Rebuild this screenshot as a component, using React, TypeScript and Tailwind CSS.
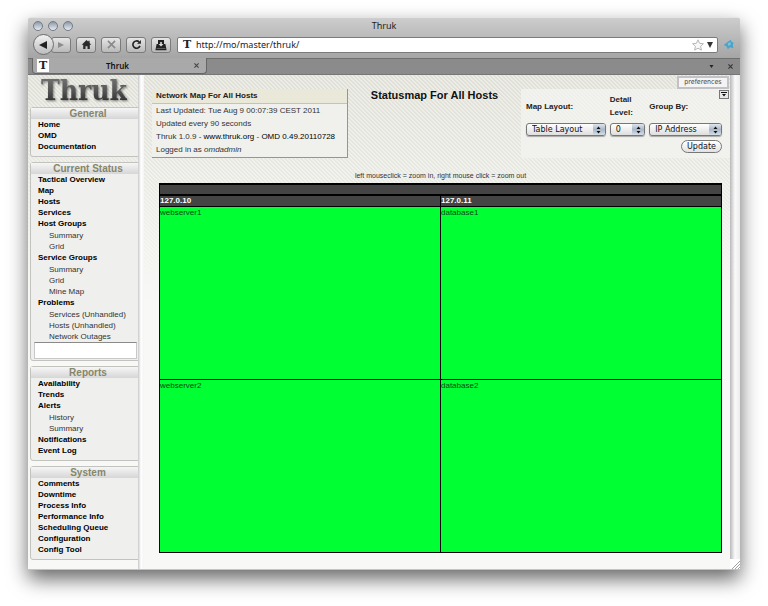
import React from "react";

type MenuItem = { label: string; children?: string[] };
type MenuSection = { title: string; items: MenuItem[]; search?: boolean };

const sections: MenuSection[] = [
  { title: "General", items: [{ label: "Home" }, { label: "OMD" }, { label: "Documentation" }] },
  {
    title: "Current Status",
    search: true,
    items: [
      { label: "Tactical Overview" },
      { label: "Map" },
      { label: "Hosts" },
      { label: "Services" },
      { label: "Host Groups", children: ["Summary", "Grid"] },
      { label: "Service Groups", children: ["Summary", "Grid", "Mine Map"] },
      { label: "Problems", children: ["Services (Unhandled)", "Hosts (Unhandled)", "Network Outages"] },
    ],
  },
  {
    title: "Reports",
    items: [
      { label: "Availability" },
      { label: "Trends" },
      { label: "Alerts", children: ["History", "Summary"] },
      { label: "Notifications" },
      { label: "Event Log" },
    ],
  },
  {
    title: "System",
    items: [
      { label: "Comments" },
      { label: "Downtime" },
      { label: "Process Info" },
      { label: "Performance Info" },
      { label: "Scheduling Queue" },
      { label: "Configuration" },
      { label: "Config Tool" },
    ],
  },
];

const hatch =
  "bg-[linear-gradient(to_bottom,rgba(248,248,246,0)_0px,rgba(248,248,246,0.25)_60px,rgba(248,248,246,1)_230px),linear-gradient(45deg,#dfdfd7_25%,#ededE7_25%,#ededE7_50%,#dfdfd7_50%,#dfdfd7_75%,#ededE7_75%)] [background-size:100%_100%,4px_4px]";

function TFavicon() {
  return (
    <span className="flex h-[13px] w-3 shrink-0 items-center justify-center bg-white font-['DejaVu_Serif',serif] text-[11px] leading-3 font-bold text-[#222]">
      T
    </span>
  );
}

function ToolButton({ label, className = "", children }: { label: string; className?: string; children: React.ReactNode }) {
  return (
    <button
      type="button"
      aria-label={label}
      className={`flex h-4 w-5 items-center justify-center rounded-[3px] border border-[#7b7b7b] bg-gradient-to-b from-[#e6e6e6] to-[#b9b9b9] ${className}`}
    >
      {children}
    </button>
  );
}

function Toolbar() {
  return (
    <div className="flex items-center pr-[6px] pl-[5px]">
      <button
        type="button"
        aria-label="Back"
        className="z-10 flex size-[21px] items-center justify-center rounded-full border border-[#6d6d6d] bg-gradient-to-b from-[#f2f2f2] to-[#bdbdbd]"
      >
        <svg viewBox="0 0 8 8" className="mr-[2px] size-2" fill="#222"><path d="M0 4 8 0v8z" /></svg>
      </button>
      <ToolButton label="Forward" className="-ml-[3px]">
        <svg viewBox="0 0 6 6" className="size-[6px]" fill="#8d8d8d"><path d="M6 3 0 0v6z" /></svg>
      </ToolButton>
      <ToolButton label="Home" className="ml-[5px]">
        <svg viewBox="0 0 12 12" className="size-[11px]" fill="#2a2a2a">
          <path d="M6 1 .8 6.2h1.6V11h2.5V7.8h2.2V11h2.5V6.2h1.6L9.4 4.3V1.8H8v1.1z" />
        </svg>
      </ToolButton>
      <ToolButton label="Stop" className="ml-[5px]">
        <svg viewBox="0 0 10 10" className="size-[9px]" stroke="#8a8a8a" strokeWidth="1.8"><path d="m1 1 8 8M9 1 1 9" /></svg>
      </ToolButton>
      <ToolButton label="Reload" className="ml-[5px]">
        <svg viewBox="0 0 12 12" className="size-[11px]" fill="none" stroke="#222" strokeWidth="1.8">
          <path d="M8.8 3.2A4 4 0 1 0 9.8 7.5" /><path d="M6.6 5.3h4.2V1z" fill="#222" stroke="none" />
        </svg>
      </ToolButton>
      <ToolButton label="Downloads" className="ml-[5px]">
        <svg viewBox="0 0 12 12" className="size-3" fill="#222">
          <path d="M3 1h6v4h1.4l1.2 6.200H.4L1.600 5H3z" />
          <path d="M5.200 3h1.600v2h1.700L6 7.600 3.500 5h1.700z" fill="#ddd" /><path d="M1.500 9.500h9" stroke="#888" strokeWidth=".6" />
        </svg>
      </ToolButton>
      <div className="ml-[6px] flex h-4 min-w-0 flex-1 items-center rounded-[2px] border border-[#7b7b7b] bg-white pr-1 pl-[3px]">
        <TFavicon />
        <input
          aria-label="Address"
          defaultValue="http://mo/master/thruk/"
          className="ml-[3px] h-[14px] min-w-0 flex-1 bg-transparent font-['Noto_Sans',sans-serif] text-[9px] text-[#222] outline-none"
        />
        <svg viewBox="0 0 12 12" className="size-3" fill="#f8f8f8" stroke="#b0b0b0" strokeWidth=".9">
          <path d="m6 .8 1.6 3.5 3.8.4-2.8 2.6.8 3.8L6 9.2l-3.4 1.9.8-3.8L.6 4.7l3.8-.4z" />
        </svg>
        <svg viewBox="0 0 6 6" className="ml-[3px] size-[6px]" fill="#333"><path d="M0 0h6L3 6z" /></svg>
      </div>
      <svg viewBox="0 0 12 12" className="ml-[5px] size-[11px]">
        <path d="M.8 6.5 5 3.400 8.500.8l1 2.400 2 .6-.8 2.800.6 3.400-3.600-.9-2.400 2-1.400-3z" fill="#4ba3c7" />
        <path d="m5 5 3-1.600.6 2.600-2.400 1.600z" fill="#7cc4de" />
      </svg>
    </div>
  );
}

function BrowserChrome() {
  return (
    <header>
      <div className="h-[41px] border-t border-[#e4e4e4] bg-gradient-to-b from-[#cdcdcd] to-[#a5a5a5]">
        <div className="relative flex h-4 items-center gap-[5px] pl-[5px]">
          {["Close", "Minimize", "Zoom"].map((name) => (
            <button
              key={name}
              type="button"
              aria-label={name}
              className="size-[10px] rounded-full border border-[#737b86] bg-gradient-to-b from-[#8f9aa8] to-[#e8edf3]"
            />
          ))}
          <span className="absolute inset-x-0 text-center font-['Noto_Sans',sans-serif] text-[9px] leading-4 text-[#222]">Thruk</span>
        </div>
        <Toolbar />
      </div>
      <div className="flex h-[17px] items-start border-t border-b border-t-[#6f6f6f] border-b-[#777] bg-[#8b8b8b] pr-[5px] pl-1">
        <div className="-mt-px flex h-4 w-[175px] items-center rounded-b-[4px] border border-t-0 border-[#666] bg-[#a9a9a9] pr-[7px] pl-1">
          <TFavicon />
          <span className="flex-1 pr-2 text-center font-['Noto_Sans',sans-serif] text-[8px] leading-3 font-semibold text-[#111]">Thruk</span>
          <button type="button" aria-label="Close tab" className="flex">
            <svg viewBox="0 0 6 6" className="size-[5px]" stroke="#444" strokeWidth="1.3"><path d="m.5.5 5 5M5.5.5l-5 5" /></svg>
          </button>
        </div>
        <div className="ml-auto flex h-[15px] items-center gap-[14px] pr-[2px]">
          <button type="button" aria-label="List tabs" className="flex">
            <svg viewBox="0 0 4 3" className="h-[3px] w-[5px]" fill="#222"><path d="M0 0h4L2 3z" /></svg>
          </button>
          <button type="button" aria-label="Close" className="flex">
            <svg viewBox="0 0 6 6" className="size-[5px]" stroke="#333" strokeWidth="1.3"><path d="m.5.5 5 5M5.5.5l-5 5" /></svg>
          </button>
        </div>
      </div>
    </header>
  );
}

function Sidebar() {
  return (
    <nav className={`w-[110px] shrink-0 overflow-hidden pb-2 pl-[2px] ${hatch}`}>
      <div className="flex h-8 justify-center">
        <span className="bg-gradient-to-b from-[#777] via-[#555] to-[#222] bg-clip-text font-['DejaVu_Serif_Condensed','DejaVu_Serif',serif] text-[28px] leading-8 font-bold text-transparent drop-shadow-[1px_1px_1px_rgba(0,0,0,0.5)]">
          Thruk
        </span>
      </div>
      <div className="-mr-2 flex flex-col gap-[5px]">
        {sections.map((s) => (
          <section key={s.title} className={`rounded-[3px] border border-[#c2c2be] bg-[#efefed] ${s.search ? "pb-px" : "pb-1"}`}>
            <h2 className="h-[11px] bg-gradient-to-b from-[#f6f6f6] to-[#d6d6d6] text-center text-[10px] leading-[11px] font-bold text-[#86866a]">
              {s.title}
            </h2>
            <ul className="pl-[7px] text-[8px] leading-[11px]">
              {s.items.map((item) => (
                <li key={item.label}>
                  <a href="#" className="block font-bold text-black">{item.label}</a>
                  {item.children && (
                    <ul className="pt-px pl-[11px]">
                      {item.children.map((c) => (
                        <li key={c}><a href="#" className="block text-[#333]">{c}</a></li>
                      ))}
                    </ul>
                  )}
                </li>
              ))}
            </ul>
            {s.search && (
              <input
                aria-label="Search"
                className="mr-[9px] ml-[3px] block h-[17px] w-[103px] border border-[#c8c8c8] border-t-[#8a8a8a] bg-white px-1 text-[8px] outline-none"
              />
            )}
          </section>
        ))}
      </div>
    </nav>
  );
}

function InfoBox() {
  return (
    <section className="w-[196px] shrink-0 self-start border-r border-b border-[#96968c] bg-[#f0f0ed] text-[8px] text-[#333]">
      <h2 className="h-[15px] border-b border-[#c4c4b4] bg-[#eae8d8] pl-1 text-[8px] leading-[14px] font-bold text-[#222]">
        Network Map For All Hosts
      </h2>
      <div className="pb-px pl-1 leading-[13px]">
        <p>Last Updated: Tue Aug 9 00:07:39 CEST 2011</p>
        <p>Updated every 90 seconds</p>
        <p>
          Thruk 1.0.9 - <a href="#" className="text-black">www.thruk.org</a> - <a href="#" className="text-black">OMD 0.49.20110728</a>
        </p>
        <p>Logged in as <em>omdadmin</em></p>
      </div>
    </section>
  );
}

function Field({ id, label, value, width }: { id: string; label: string; value: string; width: string }) {
  return (
    <div className={`flex flex-col ${width}`}>
      <label htmlFor={id} className="flex h-[26px] items-center text-[8px] leading-[13px] font-bold text-[#222]">{label}</label>
      <div className="relative mt-1">
        <select
          id={id}
          className="block h-[13px] w-full appearance-none rounded-[3px] border border-[#777] bg-gradient-to-b from-white to-[#dedede] pl-[5px] font-['DejaVu_Sans',sans-serif] text-[8px] leading-[11px] text-[#111] shadow-[0_1px_1px_rgba(0,0,0,0.3)]"
        >
          <option>{value}</option>
        </select>
        <span className="pointer-events-none absolute inset-y-px right-px flex w-3 items-center justify-center rounded-r-[2px] bg-gradient-to-b from-[#dfe6ee] via-[#a9b7c8] to-[#d5dfea]">
          <svg viewBox="0 0 5 8" className="h-2 w-[5px]" fill="#111"><path d="M2.500.5 4.500 3H.5zM2.500 7.500 4.500 5H.5z" /></svg>
        </span>
      </div>
    </div>
  );
}

function FilterForm() {
  return (
    <form className="flex w-[209px] shrink-0 flex-col self-start bg-[#f3f3ef]/80 pt-1 pr-2 pb-[5px] pl-[5px]" onSubmit={(e) => e.preventDefault()}>
      <div className="flex gap-1">
        <Field id="layout" label="Map Layout:" value="Table Layout" width="w-[81px]" />
        <Field id="detail" label="Detail Level:" value="0" width="w-9" />
        <Field id="group" label="Group By:" value="IP Address" width="w-[74px]" />
      </div>
      <button
        type="submit"
        className="mt-1 h-[13px] w-[41px] self-end rounded-full border border-[#777] bg-gradient-to-b from-white to-[#e2e2e2] font-['DejaVu_Sans',sans-serif] text-[8px] leading-[11px] text-[#111]"
      >
        Update
      </button>
    </form>
  );
}

function StatusMap() {
  const rows = [["webserver1", "database1"], ["webserver2", "database2"]];
  return (
    <table className="w-full table-fixed border-collapse border border-t-2 border-black text-left text-[8px] leading-[9px]">
      <thead className="bg-[#444] text-white">
        <tr className="h-[11px]"><td colSpan={2} className="border border-b-2 border-black p-0" /></tr>
        <tr className="h-[11px]">
          <th className="border border-black p-0">127.0.10</th>
          <th className="border border-black p-0">127.0.11</th>
        </tr>
      </thead>
      <tbody>
        {rows.map((row) => (
          <tr key={row[0]} className="h-[173px]">
            {row.map((host) => (
              <td key={host} className="border border-black bg-[#00ff33] p-0 align-top text-[#0a4a14]">
                <div className="pt-px">{host}</div>
              </td>
            ))}
          </tr>
        ))}
      </tbody>
    </table>
  );
}

export default function App() {
  return (
    <div className="min-h-screen bg-white px-7 pt-[17px] pb-9 font-['Liberation_Sans',Arial,sans-serif]">
      <div className="overflow-hidden rounded-t-[3px] shadow-[0_9px_20px_rgba(0,0,0,0.6)]">
        <BrowserChrome />
        <div className="flex border-b border-[#c4c4c4] bg-[#f8f8f6]">
          <Sidebar />
          <div className="w-[6px] shrink-0 bg-gradient-to-r from-[#c9c9c9] via-white to-[#f4f4f4]" />
          <main className={`relative flex min-w-0 flex-1 flex-col pb-4 pl-2 ${hatch}`}>
            <div className="flex justify-between pt-[14px]">
              <InfoBox />
              <h1 className="text-[11px] leading-3 font-bold text-[#111]">Statusmap For All Hosts</h1>
              <FilterForm />
            </div>
            <button
              type="button"
              className="absolute top-px right-px h-[13px] w-[52px] border-2 border-[#c2c2c6] bg-[#f4f4f4] font-['DejaVu_Sans_Condensed','DejaVu_Sans',sans-serif] text-[7px] leading-[9px] text-[#444]"
            >
              preferences
            </button>
            <button
              type="button"
              aria-label="Hide header"
              className="absolute top-[15px] right-px flex h-[9px] w-[10px] items-center justify-center border border-[#777] bg-[#e8e8e8]"
            >
              <svg viewBox="0 0 6 5" className="h-[5px] w-[6px]" fill="#111"><path d="M0 0h6v1H0zM1 2h4L3 4.500z" /></svg>
            </button>
            <div className="pr-2 pl-[7px]">
              <p className="mt-[13px] mb-[2px] text-center text-[7px] leading-[10px] text-[#333]">
                left mouseclick = zoom in, right mouse click = zoom out
              </p>
              <StatusMap />
            </div>
          </main>
          <div className="flex w-[10px] shrink-0 flex-col">
            <div className="flex-1 bg-gradient-to-r from-[#b9b9b9] via-[#fafafa] to-[#ececec]" />
            <svg viewBox="0 0 10 10" className="size-[10px] bg-white" stroke="#999" strokeWidth=".9">
              <path d="M2 10 10 2M5 10l5-5M8 10l2-2" />
            </svg>
          </div>
        </div>
      </div>
    </div>
  );
}
